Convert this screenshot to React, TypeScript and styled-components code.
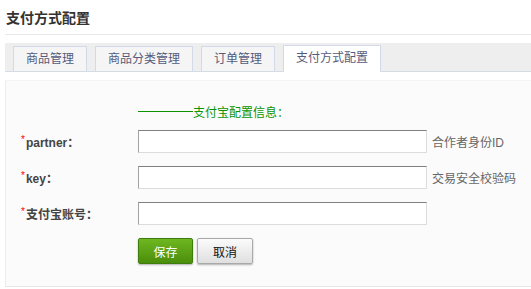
import React from 'react';
import styled, { createGlobalStyle } from 'styled-components';

const GlobalStyle = createGlobalStyle`
  html, body {
    margin: 0;
    padding: 0;
    background: #ffffff;
  }
  body {
    font-family: "Liberation Sans", "Noto Sans CJK SC", sans-serif;
    font-size: 12px;
    color: #333;
  }
`;

const tabs = ['商品管理', '商品分类管理', '订单管理', '支付方式配置'];

const fields = [
  { label: 'partner：', hint: '合作者身份ID' },
  { label: 'key：', hint: '交易安全校验码' },
  { label: '支付宝账号：', hint: '' },
];

const App = () => {
  return (
    <Page>
      <GlobalStyle />
      <Header>
        <Title>支付方式配置</Title>
      </Header>
      <TabBar>
        {tabs.map((t, i) => (
          <Tab key={t} active={i === 3}>{t}</Tab>
        ))}
      </TabBar>
      <Panel>
        <Form>
          <Spacer />
          <SectionTitle>
            <Dash />支付宝配置信息：
          </SectionTitle>
          {fields.map((f) => (
            <React.Fragment key={f.label}>
              <Label>
                <Star>*</Star>{f.label}
              </Label>
              <Field>
                <Input type="text" />
                {f.hint && <Hint>{f.hint}</Hint>}
              </Field>
            </React.Fragment>
          ))}
          <Spacer />
          <Actions>
            <Button primary>保存</Button>
            <Button>取消</Button>
          </Actions>
        </Form>
      </Panel>
    </Page>
  );
};

const Page = styled.div`
  padding-left: 5px;
  width: 526px;
  height: 289px;
  overflow: hidden;
`;

const Header = styled.div`
  height: 34px;
  border-bottom: 1px solid #e8e8e8;
  display: flex;
  align-items: center;
  padding-left: 1px;
  margin-bottom: 8px;
`;

const Title = styled.h1`
  margin: 0;
  font-size: 14px;
  font-weight: bold;
  color: #333;
  position: relative;
  top: 0px;
`;

const TabBar = styled.div`
  height: 28px;
  background: #eeeeee;
  border-bottom: 1px solid #d6dce6;
  display: flex;
  align-items: flex-end;
  gap: 8px;
  padding-left: 8px;
`;

const Tab = styled.div<{ active?: boolean }>`
  height: ${(p) => (p.active ? '26px' : '24px')};
  margin-bottom: ${(p) => (p.active ? '-1px' : '0')};
  padding: 0 12px;
  border: 1px solid #d3dae7;
  border-bottom: ${(p) => (p.active ? 'none' : '1px solid #d3dae7')};
  border-bottom-width: ${(p) => (p.active ? '0' : '0')};
  background: ${(p) => (p.active ? '#ffffff' : '#f5f5f5')};
  color: #565b7c;
  font-size: 12px;
  line-height: 25px;
  box-sizing: content-box;
`;

const Panel = styled.div`
  margin-top: 8px;
  height: 207px;
  background: #fbfbfb;
  border-left: 1px solid #ececec;
  border-top: 1px solid #f4f4f4;
  border-bottom: 1px solid #e6e6e6;
  padding: 22px 0 0 15px;
  box-sizing: border-box;
`;

const Form = styled.div`
  display: grid;
  grid-template-columns: 117px 1fr;
  row-gap: 13px;
  align-items: center;
`;

const Spacer = styled.div``;

const SectionTitle = styled.div`
  display: flex;
  align-items: center;
  height: 16px;
  margin-bottom: -2px;
  color: #0b9400;
  font-size: 12px;
`;

const Dash = styled.span`
  display: inline-block;
  width: 55px;
  border-top: 1px solid #0b9400;
`;

const Label = styled.div`
  font-weight: bold;
  color: #444;
  font-size: 12px;
  display: flex;
  align-items: center;
`;

const Star = styled.span`
  color: #ff0000;
  font-size: 10px;
  font-weight: normal;
  position: relative;
  top: -2px;
  margin-right: 1px;
`;

const Field = styled.div`
  display: flex;
  align-items: center;
`;

const Input = styled.input`
  width: 289px;
  height: 23px;
  box-sizing: border-box;
  border-style: solid;
  border-width: 1px;
  border-color: #7f7f7f #dcdcdc #dcdcdc #a3a3a3;
  background: #ffffff;
  margin: 0;
  padding: 0 4px;
  outline: none;
`;

const Hint = styled.span`
  margin-left: 5px;
  color: #666;
  font-size: 12px;
`;

const Actions = styled.div`
  display: flex;
  gap: 4px;
`;

const Button = styled.button<{ primary?: boolean }>`
  width: ${(p) => (p.primary ? '55px' : '56px')};
  height: 26px;
  box-sizing: border-box;
  margin: 0;
  padding: 0;
  font-family: "Liberation Sans", "Noto Sans CJK SC", sans-serif;
  font-size: 12px;
  cursor: pointer;
  border-radius: 2px;
  border: 1px solid ${(p) => (p.primary ? '#3e7d0b' : '#a9a9a9')};
  background: ${(p) =>
    p.primary
      ? 'linear-gradient(#6fb721, #4b8e0b)'
      : 'linear-gradient(#fbfbfb, #dfdfdf)'};
  color: ${(p) => (p.primary ? '#ffffff' : '#111')};
  box-shadow: 0 1px 2px rgba(0, 0, 0, 0.3);
`;

export default App;
